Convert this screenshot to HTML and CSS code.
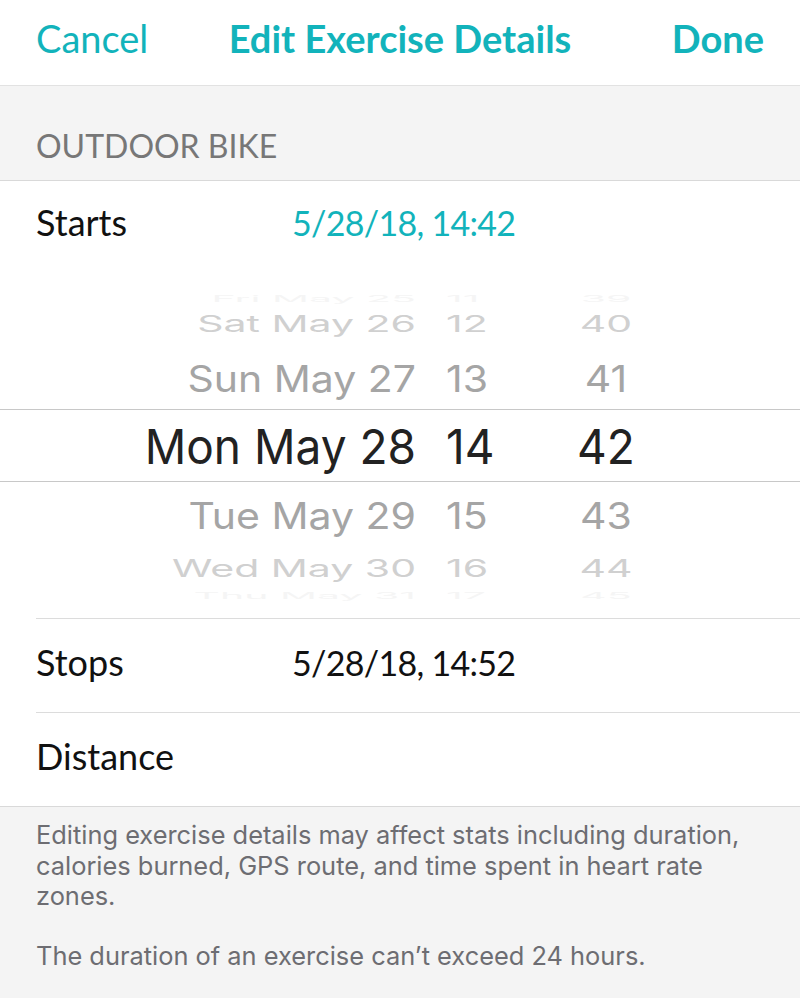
FILE: index.html
```html
<!DOCTYPE html>
<html lang="en">
<head>
<meta charset="utf-8">
<title>Edit Exercise Details</title>
<link rel="stylesheet" href="styles.css">
</head>
<body>
<div class="screen">
  <header class="navbar">
    <span class="nav-btn nav-left">Cancel</span>
    <span class="nav-title">Edit Exercise Details</span>
    <span class="nav-btn nav-right">Done</span>
  </header>

  <div class="section-head">OUTDOOR BIKE</div>

  <div class="card">
    <div class="row row-starts">
      <span class="label">Starts</span>
      <span class="value value-active">5/28/18, 14:42</span>
    </div>

    <div class="picker">
      <div class="wheel">
        <div class="prow prow-0"><span class="pc pc-date">Fri May 25</span><span class="pc pc-hour">11</span><span class="pc pc-min">39</span></div>
        <div class="prow prow-1"><span class="pc pc-date">Sat May 26</span><span class="pc pc-hour">12</span><span class="pc pc-min">40</span></div>
        <div class="prow prow-2"><span class="pc pc-date">Sun May 27</span><span class="pc pc-hour">13</span><span class="pc pc-min">41</span></div>
        <div class="prow prow-sel"><span class="pc pc-date">Mon May 28</span><span class="pc pc-hour">14</span><span class="pc pc-min">42</span></div>
        <div class="prow prow-4"><span class="pc pc-date">Tue May 29</span><span class="pc pc-hour">15</span><span class="pc pc-min">43</span></div>
        <div class="prow prow-5"><span class="pc pc-date">Wed May 30</span><span class="pc pc-hour">16</span><span class="pc pc-min">44</span></div>
        <div class="prow prow-6"><span class="pc pc-date">Thu May 31</span><span class="pc pc-hour">17</span><span class="pc pc-min">45</span></div>
      </div>
    </div>

    <div class="row row-inset">
      <span class="label">Stops</span>
      <span class="value">5/28/18, 14:52</span>
    </div>

    <div class="row row-inset">
      <span class="label">Distance</span>
    </div>
  </div>

  <footer class="notes">
    <p>Editing exercise details may affect stats including duration, calories burned, GPS route, and time spent in heart rate zones.</p>
    <p>The duration of an exercise can’t exceed 24 hours.</p>
  </footer>
</div>
</body>
</html>
```

FILE: styles.css
```css
* { box-sizing: border-box; }

html, body {
  margin: 0;
  padding: 0;
  background: #f4f4f4;
}

.screen {
  width: 800px;
  height: 998px;
  overflow: hidden;
  font-family: Lato, "Liberation Sans", sans-serif;
  background: #f4f4f4;
}

/* nav bar */
.navbar {
  height: 86px;
  background: #ffffff;
  border-bottom: 1px solid #e2e2e2;
  display: grid;
  grid-template-columns: 1fr auto 1fr;
  align-items: center;
  padding: 0 36px 10px;
  color: #12b3bb;
  font-size: 38px;
}

.nav-left { justify-self: start; }
.nav-right { justify-self: end; font-weight: 700; }
.nav-title { font-weight: 700; }

/* section header */
.section-head {
  height: 95px;
  display: flex;
  align-items: flex-end;
  padding: 0 36px 15px;
  font-size: 32px;
  color: #777777;
  border-bottom: 1px solid #d9d9d9;
}

/* card */
.card {
  background: #ffffff;
  border-bottom: 1px solid #d9d9d9;
}

.row {
  display: flex;
  align-items: center;
  padding-left: 36px;
  font-size: 36px;
  color: #111111;
}

.row-starts {
  height: 90px;
  padding-bottom: 8px;
}

.row-inset {
  height: 94px;
  border-top: 1px solid #dcdcdc;
  margin-left: 36px;
  padding-left: 0;
  padding-bottom: 7px;
}

.label {
  width: 256px;
  flex: none;
}

.value {
  font-size: 34px;
  letter-spacing: -0.7px;
}

.value-active { color: #12b3bb; }

/* picker */
.picker {
  height: 347px;
  overflow: hidden;
  padding-top: 24px;
  font-family: Inter, Roboto, "Liberation Sans", sans-serif;
}

.wheel {
  display: flex;
  flex-direction: column;
}

.prow {
  display: grid;
  grid-template-columns: 416px 70px 120px;
  grid-template-rows: minmax(0, 1fr);
  column-gap: 30px;
  align-items: center;
  color: #a5a5a5;
  font-size: 41px;
  line-height: 1;
}

.pc { display: block; }
.pc-date { text-align: right; }
.pc-hour { text-align: left; }
.pc-min { text-align: center; }

.prow-0 { height: 6px; color: #f5f5f5; }
.prow-0 .pc { transform: scaleY(0.22); }

.prow-1 { height: 46px; color: #d0d0d0; }
.prow-1 .pc { transform: scaleY(0.55); }

.prow-2 { height: 62px; }
.prow-2 .pc { transform: scaleY(0.9); }

.prow-sel {
  height: 73px;
  border-top: 1px solid #c8c8c8;
  border-bottom: 1px solid #c8c8c8;
  color: #222222;
  font-size: 46px;
}
.prow-sel .pc { transform: scaleY(1.05); }

.prow-4 { height: 66px; }
.prow-4 .pc { transform: scaleY(0.9); }

.prow-5 { height: 40px; color: #d0d0d0; }
.prow-5 .pc { transform: scaleY(0.58); }

.prow-6 { height: 14px; color: #f5f5f5; }
.prow-6 .pc { transform: scaleY(0.22); }

/* notes */
.notes {
  padding: 13px 36px 0;
  font-family: Inter, Roboto, "Liberation Sans", sans-serif;
  font-size: 25.4px;
  line-height: 30.5px;
  color: #6d6d72;
}

.notes p {
  margin: 0 0 29px;
}
```
